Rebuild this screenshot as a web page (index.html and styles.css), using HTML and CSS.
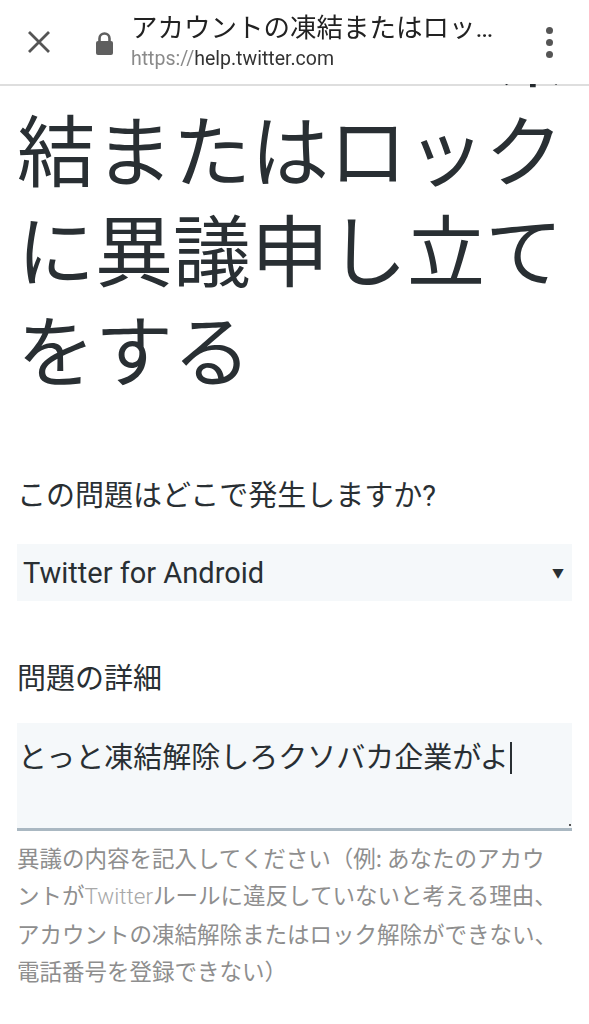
FILE: index.html
```html
<!DOCTYPE html>
<html lang="ja">
<head>
<meta charset="utf-8">
<title>アカウントの凍結またはロックに異議申し立てをする</title>
<link rel="stylesheet" href="styles.css">
</head>
<body>
<header class="topbar">
  <div class="tb-close">
    <svg width="24" height="24" viewBox="0 0 24 24"><path d="M2 2 L22 22 M22 2 L2 22" stroke="#555" stroke-width="2.8" fill="none"/></svg>
  </div>
  <div class="tb-lock">
    <svg width="19" height="25" viewBox="0 0 19 25"><path d="M4.5 11 V7.5 A5 5 0 0 1 14.5 7.5 V11" stroke="#5f5f5f" stroke-width="2.6" fill="none"/><rect x="1" y="10" width="17" height="14" rx="2" fill="#5f5f5f"/></svg>
  </div>
  <div class="tb-titles">
    <div class="tb-title">アカウントの凍結またはロッ…</div>
    <div class="tb-url"><span class="tb-scheme">https://</span>help.twitter.com</div>
  </div>
  <div class="tb-menu">
    <span class="dot"></span><span class="dot"></span><span class="dot"></span>
  </div>
</header>
<main class="content">
  <h1 class="title">アカウントの凍<br>結またはロック<br>に異議申し立て<br>をする</h1>
  <form class="form">
    <label class="label">この問題はどこで発生しますか?</label>
    <div class="select">
      <span>Twitter for Android</span>
      <span class="caret">▼</span>
    </div>
    <label class="label label-2">問題の詳細</label>
    <div class="textarea">
      <span class="typed">とっと凍結解除しろクソバカ企業がよ</span><span class="cursor"></span>
      <span class="grip"></span>
    </div>
    <p class="help">異議の内容を記入してください（例: あなたのアカウントが<span class="light">Twitter</span>ルールに違反していないと考える理由、アカウントの凍結解除またはロック解除ができない、電話番号を登録できない）</p>
  </form>
</main>
</body>
</html>
```

FILE: styles.css
```css
html, body {
  margin: 0;
  padding: 0;
  background: #fff;
}
body {
  font-family: Roboto, "Noto Sans CJK JP", sans-serif;
  color: #292f33;
  width: 589px;
  height: 1024px;
  overflow: hidden;
}
.topbar {
  position: fixed;
  top: 0;
  left: 0;
  right: 0;
  height: 84px;
  background: #fff;
  box-shadow: 0 2px 0 rgba(0, 0, 0, 0.13);
  display: flex;
  align-items: center;
  z-index: 10;
}
.tb-close {
  width: 78px;
  display: flex;
  justify-content: center;
  align-items: center;
}
.tb-lock {
  width: 36px;
  margin-left: 17px;
  display: flex;
  align-items: center;
  margin-top: 2px;
}
.tb-titles {
  flex: 1;
  display: flex;
  flex-direction: column;
  min-width: 0;
}
.tb-title {
  font-family: Roboto, "Noto Sans CJK JP", sans-serif;
  font-size: 26.5px;
  line-height: 30px;
  color: #222;
  white-space: nowrap;
}
.tb-url {
  font-size: 19.5px;
  line-height: 26px;
  color: #333;
  margin-top: 3px;
}
.tb-scheme {
  color: #8a8a8a;
}
.tb-menu {
  width: 80px;
  display: flex;
  flex-direction: column;
  align-items: center;
  gap: 5px;
  padding-left: 2px;
}
.dot {
  width: 7px;
  height: 7px;
  border-radius: 50%;
  background: #555;
}
.content {
  padding: 0 17px;
}
.title {
  margin: -3px 0 0 0;
  font-family: "Noto Sans CJK JP", sans-serif;
  font-weight: 400;
  font-size: 78px;
  line-height: 100px;
  color: #292f33;
}
.form {
  margin-top: 79px;
}
.label {
  display: block;
  font-family: Roboto, "Noto Sans CJK JP", sans-serif;
  font-size: 29px;
  line-height: 40px;
  color: #292f33;
}
.select {
  margin-top: 28px;
  height: 57px;
  background: #f5f8fa;
  display: flex;
  align-items: center;
  justify-content: space-between;
  padding: 0 8px 0 6px;
  font-size: 29px;
  color: #292f33;
}
.caret {
  font-size: 12px;
  color: #292f33;
}
.label-2 {
  margin-top: 58px;
}
.textarea {
  position: relative;
  margin-top: 24px;
  background: #f5f8fa;
  border-bottom: 3px solid #aab8c2;
  padding: 12px 1px 0 1px;
  box-sizing: border-box;
  height: 108px;
  font-family: "Noto Sans CJK JP", sans-serif;
  font-size: 29px;
  line-height: 40px;
  color: #292f33;
}
.cursor {
  display: inline-block;
  width: 2px;
  height: 32px;
  background: #292f33;
  vertical-align: -6px;
  margin-left: 1px;
}
.grip {
  position: absolute;
  right: 1px;
  bottom: 2px;
  width: 2px;
  height: 2px;
  background: #555;
}
.help {
  margin: 8px 0 0 0;
  font-family: "Noto Sans CJK JP", sans-serif;
  font-size: 22.5px;
  line-height: 37px;
  color: #8e8e8e;
  padding-right: 14.5px;
}
.light {
  font-family: Roboto, sans-serif;
  font-weight: 300;
  color: #a8a8a8;
}
```
